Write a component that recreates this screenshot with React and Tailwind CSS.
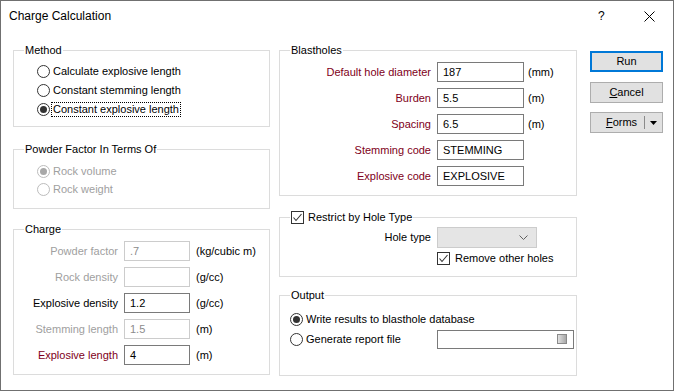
import React from 'react'

const MAROON = 'text-[#800020]'

function Radio({ checked, disabled }) {
  return (
    <span
      className={`relative inline-flex w-[13px] h-[13px] shrink-0 rounded-full border items-center justify-center bg-white ${
        disabled ? 'border-[#bcbcbc]' : 'border-[#333333]'
      }`}
    >
      {checked && (
        <span className={`w-[7px] h-[7px] rounded-full ${disabled ? 'bg-[#a8a8a8]' : 'bg-[#333333]'}`} />
      )}
    </span>
  )
}

function Check({ checked }) {
  return (
    <span className="inline-flex w-[13px] h-[13px] shrink-0 border border-[#333333] bg-white items-center justify-center">
      {checked && (
        <svg width="11" height="11" viewBox="0 0 11 11">
          <polyline points="1.5,5.5 4,8.5 9.5,2" fill="none" stroke="#333" strokeWidth="1.1" />
        </svg>
      )}
    </span>
  )
}

function Group({ legend, className, children }) {
  return (
    <div className={`relative border border-[#dcdcdc] ${className}`}>
      <div className="absolute left-[10px] -top-[8px] bg-white px-[1px] leading-[14px] flex items-center">
        {legend}
      </div>
      {children}
    </div>
  )
}

function Field({ value, disabled, w, h = 'h-[20px]' }) {
  return (
    <div
      className={`${w} ${h} shrink-0 border bg-white flex items-center pl-[5px] ${
        disabled ? 'border-[#cccccc] text-[#8c8c8c]' : 'border-[#7a7a7a] text-black'
      }`}
    >
      {value}
    </div>
  )
}

function ChargeRow({ label, labelClass, value, disabled, unit }) {
  return (
    <div className="flex items-center h-[20px]">
      <span className={`w-[104px] text-right ${labelClass}`}>{label}</span>
      <span className="ml-[6px]">
        <Field value={value} disabled={disabled} w="w-[66px]" />
      </span>
      <span className="ml-[6px]">{unit}</span>
    </div>
  )
}

function BlastRow({ label, value, unit }) {
  return (
    <div className="flex items-center h-[20px]">
      <span className={`w-[151px] text-right ${MAROON}`}>{label}</span>
      <span className="ml-[6px]">
        <Field value={value} w="w-[87px]" />
      </span>
      {unit && <span className="ml-[4px]">{unit}</span>}
    </div>
  )
}

export default function App() {
  return (
    <div
      className="w-[674px] h-[391px] border border-[#707070] bg-white flex flex-col text-[11px] text-black"
      style={{ fontFamily: '"Liberation Sans", Arial, sans-serif' }}
    >
      {/* Title bar */}
      <div className="h-[30px] flex items-center shrink-0">
        <span className="pl-[8px] text-[12px]">Charge Calculation</span>
        <span className="ml-auto text-[12px] w-[8px] mr-[38px]">?</span>
        <svg width="11" height="11" viewBox="0 0 11 11" className="mr-[18px]">
          <line x1="0.5" y1="0.5" x2="10.5" y2="10.5" stroke="#000" strokeWidth="1" />
          <line x1="10.5" y1="0.5" x2="0.5" y2="10.5" stroke="#000" strokeWidth="1" />
        </svg>
      </div>

      <div className="flex pt-[19px] pl-[12px]">
        {/* Left column */}
        <div className="w-[257px] flex flex-col shrink-0">
          <Group legend={<span>Method</span>} className="h-[77px]">
            <div className="pt-[11px] pl-[23px] flex flex-col">
              <div className="h-[19px] flex items-center">
                <Radio />
                <span className="ml-[3px]">Calculate explosive length</span>
              </div>
              <div className="h-[19px] flex items-center">
                <Radio />
                <span className="ml-[3px]">Constant stemming length</span>
              </div>
              <div className="h-[19px] flex items-center">
                <Radio checked />
                <span className="ml-[1px] px-[1px] border border-dotted border-black leading-[13px]">
                  Constant explosive length
                </span>
              </div>
            </div>
          </Group>

          <Group legend={<span>Powder Factor In Terms Of</span>} className="h-[60px] mt-[22px]">
            <div className="pt-[12px] pl-[23px] flex flex-col text-[#a0a0a0]">
              <div className="h-[18px] flex items-center">
                <Radio checked disabled />
                <span className="ml-[3px]">Rock volume</span>
              </div>
              <div className="h-[18px] flex items-center">
                <Radio disabled />
                <span className="ml-[3px]">Rock weight</span>
              </div>
            </div>
          </Group>

          <Group legend={<span>Charge</span>} className="h-[146px] mt-[20px]">
            <div className="pt-[11px] flex flex-col gap-[6px]">
              <ChargeRow label="Powder factor" labelClass="text-[#a0a0a0]" value=".7" disabled unit="(kg/cubic m)" />
              <ChargeRow label="Rock density" labelClass="text-[#a0a0a0]" value="" disabled unit="(g/cc)" />
              <ChargeRow label="Explosive density" labelClass="text-black" value="1.2" unit="(g/cc)" />
              <ChargeRow label="Stemming length" labelClass="text-[#a0a0a0]" value="1.5" disabled unit="(m)" />
              <ChargeRow label="Explosive length" labelClass={MAROON} value="4" unit="(m)" />
            </div>
          </Group>
        </div>

        {/* Middle column */}
        <div className="w-[298px] ml-[9px] flex flex-col shrink-0">
          <Group legend={<span>Blastholes</span>} className="h-[146px]">
            <div className="pt-[11px] flex flex-col gap-[6px]">
              <BlastRow label="Default hole diameter" value="187" unit="(mm)" />
              <BlastRow label="Burden" value="5.5" unit="(m)" />
              <BlastRow label="Spacing" value="6.5" unit="(m)" />
              <BlastRow label="Stemming code" value="STEMMING" />
              <BlastRow label="Explosive code" value="EXPLOSIVE" />
            </div>
          </Group>

          <Group
            legend={
              <>
                <Check checked />
                <span className="ml-[4px]">Restrict by Hole Type</span>
              </>
            }
            className="h-[60px] mt-[21px]"
          >
            <div className="pt-[9px] flex flex-col">
              <div className="flex items-center h-[21px]">
                <span className="w-[151px] text-right">Hole type</span>
                <div className="ml-[6px] w-[100px] h-[21px] border border-[#cccccc] bg-[#e5e5e5] flex items-center justify-end pr-[8px]">
                  <svg width="9" height="5" viewBox="0 0 9 5">
                    <polyline points="0.5,0.5 4.5,4.5 8.5,0.5" fill="none" stroke="#606060" strokeWidth="1" />
                  </svg>
                </div>
              </div>
              <div className="flex items-center h-[16px] mt-[2px] pl-[157px]">
                <Check checked />
                <span className="ml-[5px]">Remove other holes</span>
              </div>
            </div>
          </Group>

          <Group legend={<span>Output</span>} className="h-[81px] mt-[18px]">
            <div className="pt-[13px] pl-[10px] flex flex-col">
              <div className="h-[20px] flex items-center">
                <Radio checked />
                <span className="ml-[3px]">Write results to blasthole database</span>
              </div>
              <div className="h-[20px] flex items-center">
                <Radio />
                <span className="ml-[3px]">Generate report file</span>
                <div className="ml-auto mr-[2px] w-[137px] h-[19px] border border-[#7a7a7a] bg-white flex items-center justify-end pr-[6px]">
                  <span className="w-[10px] h-[10px] border border-[#8a8a8a] bg-gradient-to-r from-[#e0e0e0] to-[#a8a8a8]" />
                </div>
              </div>
            </div>
          </Group>
        </div>

        {/* Buttons */}
        <div className="w-[73px] ml-[13px] flex flex-col shrink-0">
          <button className="h-[21px] mt-[1px] border-2 border-[#0078d7] bg-[#e1e1e1] flex items-center justify-center">
            Run
          </button>
          <button className="h-[21px] mt-[10px] border border-[#adadad] bg-[#e1e1e1] flex items-center justify-center">
            <span><span className="underline">C</span>ancel</span>
          </button>
          <button className="h-[21px] mt-[9px] border border-[#adadad] bg-[#e1e1e1] flex items-center">
            <span className="flex-1 text-center pl-[8px]"><span className="underline">F</span>orms</span>
            <span className="w-[1px] h-[13px] bg-[#8a8a8a]" />
            <span className="w-[17px] flex items-center justify-center">
              <svg width="7" height="4" viewBox="0 0 7 4">
                <polygon points="0,0 7,0 3.5,4" fill="#000" />
              </svg>
            </span>
          </button>
        </div>
      </div>
    </div>
  )
}
